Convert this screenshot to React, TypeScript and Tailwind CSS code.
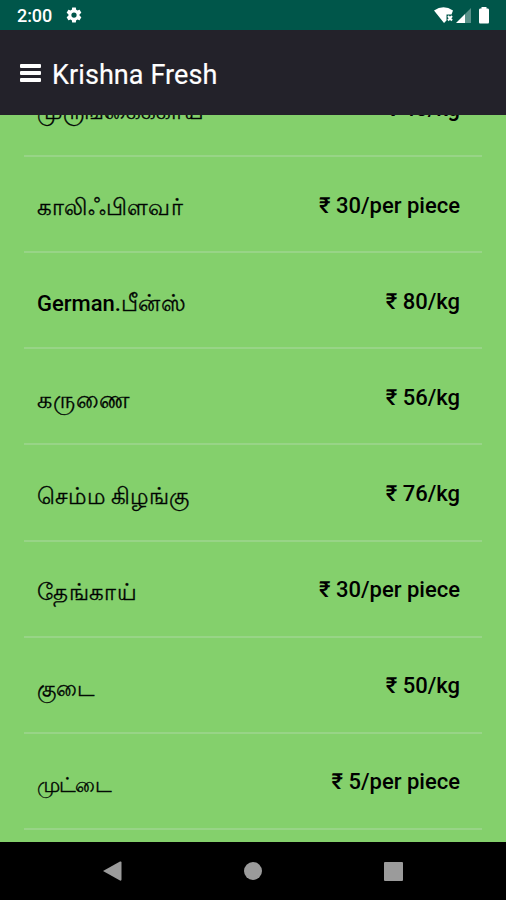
type Item = { pre?: string; name: string; price: string; size: string };

const items: Item[] = [
  { name: "முருங்கைக்காய்", price: "₹ 40/kg", size: "text-[23.3px] tracking-[0.1px]" },
  { name: "காலிஃபிளவர்", price: "₹ 30/per piece", size: "text-[23px] tracking-[0.3px]" },
  { pre: "German.", name: "பீன்ஸ்", price: "₹ 80/kg", size: "text-[23px] tracking-[0.5px]" },
  { name: "கருணை", price: "₹ 56/kg", size: "text-[23.5px] tracking-[1.1px]" },
  { name: "செம்ம கிழங்கு", price: "₹ 76/kg", size: "text-[23px] tracking-[-0.15px]" },
  { name: "தேங்காய்", price: "₹ 30/per piece", size: "text-[23px] tracking-[0.7px]" },
  { name: "குடை", price: "₹ 50/kg", size: "text-[22px] tracking-[0px]" },
  { name: "முட்டை", price: "₹ 5/per piece", size: "text-[20.5px] tracking-[-0.9px]" },
];

function StatusBar() {
  return (
    <div className="flex h-[30px] shrink-0 items-center bg-[#00564a] pr-4 pl-[17px] text-white">
      <span className="w-[48px] pt-[2px] text-[18px] font-medium leading-none tracking-[-0.1px]">2:00</span>
      <svg className="h-[18px] w-[18px]" viewBox="0 0 24 24" fill="currentColor">
        <path d="M19.43 12.98c.04-.32.07-.64.07-.98s-.03-.66-.07-.98l2.11-1.65c.19-.15.24-.42.12-.64l-2-3.46c-.12-.22-.39-.3-.61-.22l-2.49 1c-.52-.4-1.08-.73-1.69-.98l-.38-2.65C14.46 2.18 14.25 2 14 2h-4c-.25 0-.46.18-.49.42l-.38 2.65c-.61.25-1.17.59-1.69.98l-2.49-1c-.23-.09-.49 0-.61.22l-2 3.46c-.13.22-.07.49.12.64l2.11 1.65c-.04.32-.07.65-.07.98s.03.66.07.98l-2.11 1.65c-.19.15-.24.42-.12.64l2 3.46c.12.22.39.3.61.22l2.49-1c.52.4 1.08.73 1.69.98l.38 2.65c.03.24.24.42.49.42h4c.25 0 .46-.18.49-.42l.38-2.65c.61-.25 1.17-.59 1.69-.98l2.49 1c.23.09.49 0 .61-.22l2-3.46c.12-.22.07-.49-.12-.64l-2.11-1.65zM12 15.5a3.5 3.5 0 1 1 0-7 3.5 3.5 0 0 1 0 7z" />
      </svg>
      <svg className="ml-auto h-[18px] w-[56px]" viewBox="0 0 56 18">
        <path d="M0 4.500Q9.500 -2 19 4.500L17.500 8.500H12.500V14.500L10 17Z" fill="#fff" />
        <path d="M14 10l4 4.500M18 10l-4 4.500" stroke="#fff" strokeWidth="2" />
        <path d="M22 17L31 8V17Z" fill="#fff" />
        <path d="M31 8L37 2V17H31Z" fill="#fff" opacity=".35" />
        <path d="M47.500 1h5v1.500h1.500Q55 2.500 55 4v12q0 1.500-1 1.500h-8Q45 17.500 45 16V4q0-1.500 1-1.500h1.500z" fill="#fff" />
      </svg>
    </div>
  );
}

function Header() {
  return (
    <header className="flex h-[85px] shrink-0 items-center bg-[#23222a] pt-px pl-5 text-white">
      <div className="flex w-8 flex-col gap-[3px]">
        <span className="h-1 w-[21px] rounded-[1px] bg-white" />
        <span className="h-1 w-[21px] rounded-[1px] bg-white" />
        <span className="h-1 w-[21px] rounded-[1px] bg-white" />
      </div>
      <h1 className="pt-1 text-[27px] leading-8 tracking-[0.08px] [-webkit-text-stroke:0.2px_white]">Krishna Fresh</h1>
    </header>
  );
}

function Row({ item }: { item: Item }) {
  return (
    <li className="flex h-[96.15px] shrink-0 items-center justify-between border-b-2 border-[#98d487] pr-[22px] pl-[13px] text-[22px] leading-8 text-black">
      <span className="pt-[8px] whitespace-nowrap">
        {item.pre && <span className="font-medium">{item.pre}</span>}
        <span className={item.size + " [-webkit-text-stroke:0.3px_#07140a]"}>{item.name}</span>
      </span>
      <span className="pt-[3px] font-medium whitespace-nowrap">{item.price}</span>
    </li>
  );
}

function NavBar() {
  return (
    <nav className="flex h-[58px] shrink-0 items-center justify-between bg-black pr-[103px] pl-[102px]">
      <svg className="h-[22px] w-5" viewBox="0 0 20 22" fill="#9b9b9b">
        <path d="M1 11L18 1.500Q19.500 1 19.500 2.500V19.500Q19.500 21 18 20.500Z" />
      </svg>
      <span className="h-[18px] w-[18px] rounded-full bg-[#9b9b9b]" />
      <span className="h-[19px] w-[19px] rounded-[1px] bg-[#9b9b9b]" />
    </nav>
  );
}

export default function App() {
  return (
    <div className="flex h-[900px] w-[506px] flex-col overflow-hidden bg-black font-[Roboto,'Noto_Sans',sans-serif]">
      <StatusBar />
      <Header />
      <main className="flex min-h-0 flex-1 flex-col justify-end overflow-hidden bg-[#84d06c] pr-6 pb-3 pl-6">
        <ul className="flex shrink-0 flex-col">
          {items.map((item) => (
            <Row key={item.name} item={item} />
          ))}
        </ul>
      </main>
      <NavBar />
    </div>
  );
}
